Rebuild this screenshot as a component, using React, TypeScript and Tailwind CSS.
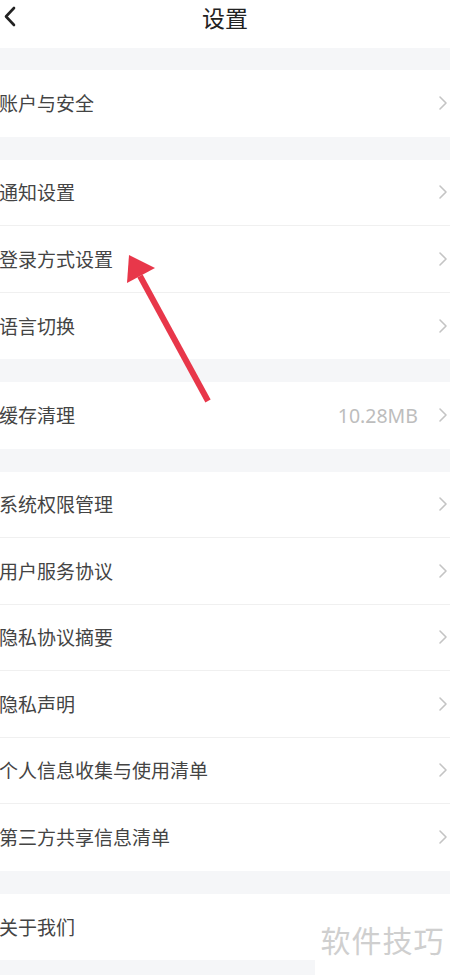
import React from "react";

const groups: { label: string; value?: string }[][] = [
  [{ label: "账户与安全" }],
  [{ label: "通知设置" }, { label: "登录方式设置" }, { label: "语言切换" }],
  [{ label: "缓存清理", value: "10.28MB" }],
  [
    { label: "系统权限管理" },
    { label: "用户服务协议" },
    { label: "隐私协议摘要" },
    { label: "隐私声明" },
    { label: "个人信息收集与使用清单" },
    { label: "第三方共享信息清单" },
  ],
  [{ label: "关于我们" }],
];

function Chevron() {
  return (
    <svg width="10" height="16" viewBox="0 0 10 16" className="shrink-0">
      <path d="M2 2 L8 8 L2 14" fill="none" stroke="#c4c4c4" strokeWidth="1.6" strokeLinecap="round" strokeLinejoin="round" />
    </svg>
  );
}

export default function App() {
  return (
    <div
      className="relative w-[450px] h-[975px] overflow-hidden bg-[#f5f6f8]"
      style={{ fontFamily: '"Noto Sans CJK SC", "Noto Sans", sans-serif' }}
    >
      <div className="h-[48px] bg-white flex items-center justify-center relative">
        <svg width="14" height="22" viewBox="0 0 14 22" className="absolute left-[3px] top-[6px]">
          <path d="M11 2 L3 10.5 L11 19" fill="none" stroke="#222" strokeWidth="2.6" strokeLinecap="round" strokeLinejoin="round" />
        </svg>
        <span className="text-[23px] text-[#222] leading-none -mt-[14px]">设置</span>
      </div>
      <div className="flex flex-col gap-[23px] pt-[22px]">
        {groups.map((g, gi) => (
          <div key={gi} className="bg-white flex flex-col">
            {g.map((r, ri) => (
              <div
                key={ri}
                className={`h-[66.5px] flex items-center pr-[2px] ${ri < g.length - 1 ? "border-b border-[#f0f0f0]" : ""}`}
              >
                <span className="text-[19px] text-[#444] leading-none flex-1 -ml-[1px] -mt-[1px]">{r.label}</span>
                {r.value && (
                  <span
                    className="text-[19.5px] text-[#bdbdbd] mr-[20px] leading-none"
                    style={{ fontFamily: '"Noto Sans", sans-serif' }}
                  >
                    {r.value}
                  </span>
                )}
                <Chevron />
              </div>
            ))}
          </div>
        ))}
      </div>
      <svg className="absolute left-0 top-0 pointer-events-none" width="450" height="975">
        <line x1="208" y1="401" x2="140" y2="276" stroke="#e8374a" strokeWidth="6" strokeLinecap="butt" />
        <polygon points="129,255 155,268 127,283" fill="#e8374a" />
      </svg>
      <div className="absolute right-0 top-[915px] w-[135px] h-[60px] bg-white flex items-start justify-center">
        <span className="text-[30px] text-[#cfcfcf] leading-none mt-[9px] tracking-[1px]">软件技巧</span>
      </div>
    </div>
  );
}
